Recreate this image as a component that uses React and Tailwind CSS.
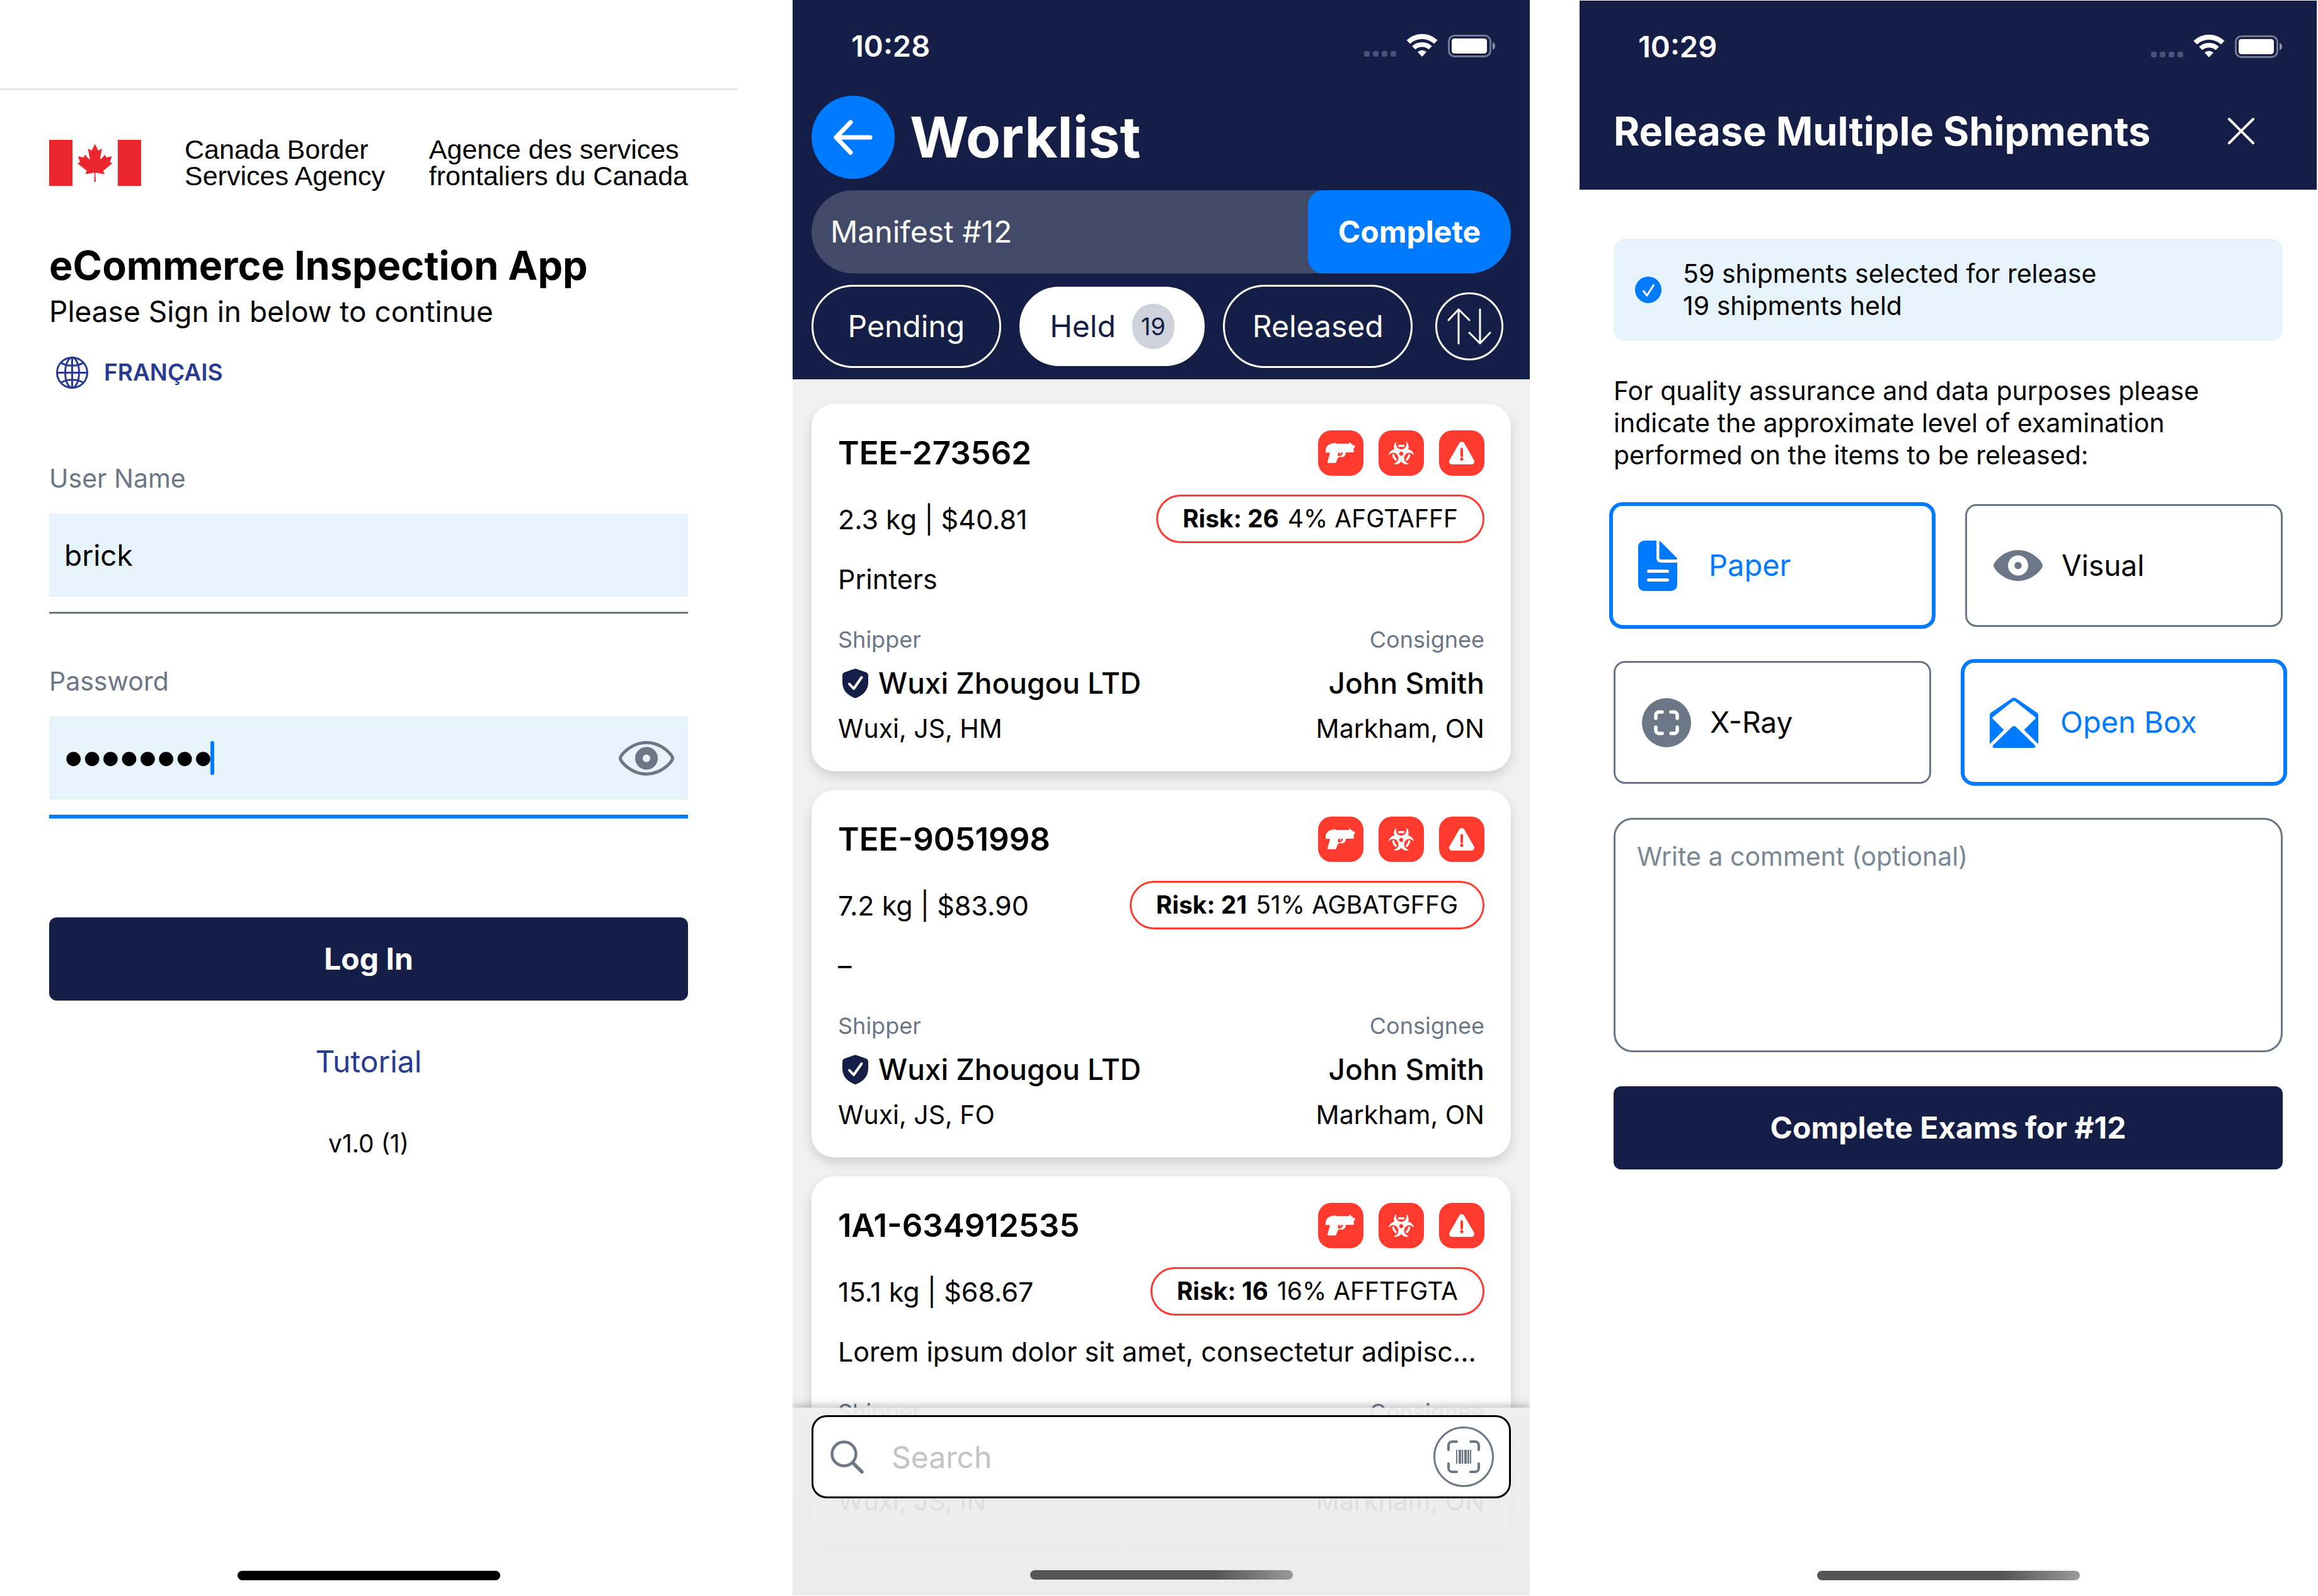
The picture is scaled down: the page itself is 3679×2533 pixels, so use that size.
import { FaBiohazard } from "react-icons/fa";

/* ---------- icons ---------- */

function StatusIcons() {
  return (
    <svg width="208" height="40" viewBox="0 0 208 40" fill="none" aria-hidden="true">
      <g fill="#4a5379">
        <rect x="0" y="28" width="9" height="9" rx="3" />
        <rect x="14" y="28" width="9" height="9" rx="3" />
        <rect x="28" y="28" width="9" height="9" rx="3" />
        <rect x="42" y="28" width="9" height="9" rx="3" />
      </g>
      <path d="M70.2 13.6a32 32 0 0 1 43.6 0" stroke="#fff" strokeWidth="8" />
      <path d="M78.8 22.9a19.3 19.3 0 0 1 26.4 0" stroke="#fff" strokeWidth="7.4" />
      <path d="M92 37l-7-7.5a10.3 10.3 0 0 1 14 0z" fill="#fff" />
      <rect x="134.5" y="3.5" width="66" height="33" rx="9" stroke="#727890" strokeWidth="3" />
      <rect x="139" y="8" width="56" height="24" rx="4.5" fill="#fff" />
      <path d="M204 14c5.300 2.600 5.300 9.400 0 12z" fill="#8f94aa" />
    </svg>
  );
}

function FlagIcon() {
  return (
    <svg width="146" height="73" viewBox="0 0 146 73" fill="#ec262d" role="img" aria-label="Canada">
      <path d="M0 0h37v73H0zM109 0h37v73h-37z" />
      <path
        transform="translate(72.7 36.300) scale(0.0149)"
        d="m-90 2030 45-863a95 95 0 0 0-111-98l-859 151 116-320a65 65 0 0 0-20-73l-941-762 212-99a65 65 0 0 0 34-79l-186-572 542 115a65 65 0 0 0 73-38l105-247 423 454a65 65 0 0 0 111-57l-204-1052 327 189a65 65 0 0 0 91-27l332-652 332 652a65 65 0 0 0 91 27l327-189-204 1052a65 65 0 0 0 111 57l423-454 105 247a65 65 0 0 0 73 38l542-115-186 572a65 65 0 0 0 34 79l212 99-941 762a65 65 0 0 0-20 73l116 320-859-151a95 95 0 0 0-111 98l45 863z"
      />
    </svg>
  );
}

function GlobeIcon() {
  return (
    <svg width="51" height="51" viewBox="0 0 51 51" fill="none" stroke="#283b93" strokeWidth="3" aria-hidden="true">
      <circle cx="25.5" cy="25.5" r="24" />
      <ellipse cx="25.5" cy="25.5" rx="11" ry="24" />
      <path d="M25.500 1.500v48M1.500 25.500h48M7 9c9 7 28 7 37 0M7 42c9-7 28-7 37 0" />
    </svg>
  );
}

function EyeOutlineIcon() {
  return (
    <svg width="88" height="55" viewBox="0 0 88 55" fill="none" aria-hidden="true">
      <path
        d="M2.500 27.500C2.500 22 20 2.500 44 2.500S85.500 22 85.500 27.500 68 52.500 44 52.500 2.500 33 2.500 27.500z"
        stroke="#6b7686"
        strokeWidth="5"
      />
      <circle cx="44" cy="27.500" r="12" stroke="#6b7686" strokeWidth="12" />
    </svg>
  );
}

function BackIcon() {
  return (
    <svg width="64" height="56" viewBox="0 0 64 56" fill="none" stroke="#fff" strokeWidth="7" strokeLinecap="round" strokeLinejoin="round" aria-hidden="true">
      <path d="M28 4L5 28l23 24M6 28h53" />
    </svg>
  );
}

function SortIcon() {
  return (
    <svg width="72" height="60" viewBox="0 0 72 60" fill="none" stroke="#fff" strokeWidth="3" strokeLinecap="round" strokeLinejoin="round" aria-hidden="true">
      <path d="M19 57V3M3 20L19 3l17 17M53 3v54M36 40l17 17 16-17" />
    </svg>
  );
}

function PistolIcon() {
  return (
    <svg width="72" height="72" viewBox="0 0 216 216" fill="#fff" aria-hidden="true">
      <path
        fillRule="evenodd"
        d="M36 104V94c2-14 10-27 28-31l7-1c1-3 13-3 14 0l6 2h56l1-6h6l3 6 7 2v5h11v12h-5v18c0 3-1 4-4 4h-34c-1 13-7 22-18 22-8 0-16-1-20 4l-8 21c-1 2-2 3-4 3H48c-3 0-4-2-3-5l11-40c0-2 0-4-3-4H38c-2 0-2-1-2-2zM97 105c-2 6-4 11-3 17 9 1 22 2 24-17h-8l-1 9c-4 1-6-2-5-9z"
      />
    </svg>
  );
}

function WarningIcon() {
  return (
    <svg width="40" height="36" viewBox="0 0 40 36" aria-hidden="true">
      <path d="M20 4.500L4.500 31.500h31z" fill="#fff" stroke="#fff" strokeWidth="9" strokeLinejoin="round" />
      <path d="M20 11.500v11" stroke="#ff3b30" strokeWidth="4" strokeLinecap="round" />
      <circle cx="20" cy="27.500" r="2.600" fill="#ff3b30" />
    </svg>
  );
}

function ShieldIcon() {
  return (
    <svg width="41" height="47" viewBox="0 0 41 47" aria-hidden="true">
      <path d="M18.500.8a5 5 0 0 1 4 0l15 5.200c2 .8 3.500 2.500 3.500 5v11c0 13-9 20.500-18.500 24.500a5 5 0 0 1-4 0C9 42.500 0 35 0 22V11c0-2.500 1.500-4.200 3.500-5z" fill="#141e46" />
      <path d="M11 24.500l7 7.500L30.500 14" fill="none" stroke="#fff" strokeWidth="4" strokeLinecap="round" strokeLinejoin="round" />
    </svg>
  );
}

function SearchIcon() {
  return (
    <svg width="53" height="53" viewBox="0 0 53 53" fill="none" stroke="#6b7686" strokeLinecap="round" aria-hidden="true">
      <circle cx="21.500" cy="21.500" r="19" strokeWidth="4.500" />
      <path d="M35.500 35.500L50 50" strokeWidth="5.500" />
    </svg>
  );
}

function BarcodeScanIcon() {
  return (
    <svg width="52" height="52" viewBox="0 0 52 52" aria-hidden="true">
      <path
        d="M2 15V8a6 6 0 0 1 6-6h7M37 2h7a6 6 0 0 1 6 6v7M50 37v7a6 6 0 0 1-6 6h-7M15 50H8a6 6 0 0 1-6-6v-7"
        fill="none"
        stroke="#6b7686"
        strokeWidth="4"
        strokeLinecap="round"
      />
      <path d="M14 15h2v22h-2zM18 15h4v22h-4zM23 15h2.400v22H23zM27 15h4v22h-4zM32 15h2.700v22H32zM36 15h2v22h-2z" fill="#6b7686" />
    </svg>
  );
}

function CloseIcon() {
  return (
    <svg width="44" height="44" viewBox="0 0 44 44" stroke="#fff" strokeWidth="4" strokeLinecap="round" aria-hidden="true">
      <path d="M3 3l38 38M41 3L3 41" />
    </svg>
  );
}

function CheckCircleIcon() {
  return (
    <svg width="42" height="42" viewBox="0 0 42 42" aria-hidden="true">
      <circle cx="21" cy="21" r="21" fill="#007aff" />
      <path d="M13.500 23l5.500 7 10.500-16.500" fill="none" stroke="#fff" strokeWidth="3" strokeLinecap="round" strokeLinejoin="round" />
    </svg>
  );
}

function PaperIcon() {
  return (
    <svg width="62" height="80" viewBox="0 0 62 80" fill="#007aff" aria-hidden="true">
      <path
        fillRule="evenodd"
        d="M11 0h18v27c0 5 3 8 8 8h25v34c0 7-4 11-11 11H11C4 80 0 76 0 69V11C0 4 4 0 11 0zM16.500 46a2.500 2.500 0 0 0 0 5h30a2.500 2.500 0 0 0 0-5zM16.500 60a2.500 2.500 0 0 0 0 5h30a2.500 2.500 0 0 0 0-5z"
      />
      <path d="M33.500.5c1 .3 2 1 3 2L60 26c1 1 2 2.500 2 4H36.500c-2 0-3-1-3-3z" />
    </svg>
  );
}

function EyeSolidIcon() {
  return (
    <svg width="78" height="49" viewBox="0 0 78 49" aria-hidden="true">
      <path d="M0 24.500C0 19 16 0 39 0s39 19 39 24.500S62 49 39 49 0 30 0 24.500z" fill="#6b7686" />
      <circle cx="39" cy="24.500" r="16" fill="#fff" />
      <circle cx="39" cy="24.500" r="5.800" fill="#6b7686" />
    </svg>
  );
}

function XRayIcon() {
  return (
    <svg width="78" height="78" viewBox="0 0 78 78" aria-hidden="true">
      <circle cx="39" cy="39" r="39" fill="#6b7686" />
      <path
        d="M22 32v-5a5 5 0 0 1 5-5h5M46 22h5a5 5 0 0 1 5 5v5M56 46v5a5 5 0 0 1-5 5h-5M32 56h-5a5 5 0 0 1-5-5v-5"
        fill="none"
        stroke="#fff"
        strokeWidth="5.500"
        strokeLinecap="round"
      />
    </svg>
  );
}

function OpenBoxIcon() {
  return (
    <svg width="77" height="80" viewBox="0 0 77 80" fill="#007aff" aria-hidden="true">
      <path d="M35 1.500c2.500-1.800 4.500-1.800 7 0l33 22.500c1.500 1 2 2.500 2 4.500v45.500L54.500 51.500 73 33c-.5-1.500-1.500-2.500-3-3.500L41 6.500c-2-1.300-3-1.300-5 0L7 29.500c-1.500 1-2.500 2-3 3.500l18.500 18.500L0 74V28.500c0-2 .5-3.500 2-4.500z" />
      <path d="M34.500 47.500c3-3 5-3 8 0L72 76c1 2 0 4-3 4H8c-3 0-4-2-3-4z" />
    </svg>
  );
}

/* ---------- shared parts ---------- */

function StatusBar({ time }) {
  return (
    <div className="flex items-center justify-between pt-[43px] pr-[55px] pl-[93px]">
      <span className="text-[47px] leading-[60px] font-semibold text-white">{time}</span>
      <StatusIcons />
    </div>
  );
}

function HomeIndicator({ tone }) {
  return <div className={`mx-auto h-[15px] w-[417px] rounded-full ${tone}`} />;
}

const fadeTone = "bg-linear-to-r from-[#555555] from-70% to-[#9a9a9a]";

/* ---------- sign-in screen ---------- */

function LoginScreen() {
  return (
    <section className="flex h-full min-w-0 flex-1 flex-col bg-white">
      <div className="h-[142px] border-b border-[#c4c4c6]" />
      <div className="flex flex-1 flex-col px-[78px] pt-[74px] pb-[24px]">
        <header className="flex items-center justify-between font-['Liberation_Sans',sans-serif] text-[43px] leading-[42px]">
          <div className="flex items-center gap-[69px]">
            <FlagIcon />
            <p>
              Canada Border
              <br />
              Services Agency
            </p>
          </div>
          <p>
            Agence des services
            <br />
            frontaliers du Canada
          </p>
        </header>

        <h1 className="mt-[82px] text-[63px] leading-[78px] font-bold">eCommerce Inspection App</h1>
        <p className="mt-1 text-[46px] leading-[60px]">Please Sign in below to continue</p>
        <a href="#francais" className="mt-[37px] flex items-center gap-[25px] self-start pl-[11px] text-[37px] leading-[60px] font-semibold text-[#283b93]">
          <GlobeIcon />
          FRANÇAIS
        </a>

        <form className="mt-[113px] flex flex-col" onSubmit={(e) => e.preventDefault()}>
          <label htmlFor="username" className="text-[41px] leading-[51px] text-[#6b7686]">
            User Name
          </label>
          <div className="mt-[30px] border-b-[3px] border-[#6b7686] pb-[24px]">
            <input id="username" type="text" defaultValue="brick" className="h-[132px] w-full bg-[#e6f3fa] px-[24px] text-[46px] outline-none" />
          </div>

          <label htmlFor="password" className="mt-[82px] text-[41px] leading-[51px] text-[#6b7686]">
            Password
          </label>
          <div className="mt-[30px] border-b-[6px] border-[#007aff] pb-[24px]">
            <div className="relative flex h-[132px] items-center bg-[#e6f3fa] pr-[22px]">
              <input
                id="password"
                type="password"
                defaultValue="password"
                className="h-full min-w-0 flex-1 bg-transparent px-[24px] font-['Liberation_Sans',sans-serif] text-[84px] outline-none"
              />
              <span className="absolute left-[256px] h-[54px] w-[6px] rounded-full bg-[#007aff]" />
              <button type="button" aria-label="Show password">
                <EyeOutlineIcon />
              </button>
            </div>
          </div>

          <button type="submit" className="mt-[157px] h-[132px] rounded-xl bg-[#141e46] text-[48px] font-bold text-white">
            Log In
          </button>
        </form>

        <a href="#tutorial" className="mt-[67px] self-center text-[48px] leading-[60px] text-[#283b93]">
          Tutorial
        </a>
        <p className="mt-[76px] text-center text-[39px] leading-[48px]">v1.0 (1)</p>

        <div className="mt-auto">
          <HomeIndicator tone="bg-black" />
        </div>
      </div>
    </section>
  );
}

/* ---------- worklist screen ---------- */

const shipments = [
  { id: "TEE-273562", weight: "2.3 kg | $40.81", risk: "26", detail: "4% AFGTAFFF", goods: "Printers", origin: "Wuxi, JS, HM" },
  { id: "TEE-9051998", weight: "7.2 kg | $83.90", risk: "21", detail: "51% AGBATGFFG", goods: "–", origin: "Wuxi, JS, FO" },
  {
    id: "1A1-634912535",
    weight: "15.1 kg | $68.67",
    risk: "16",
    detail: "16% AFFTFGTA",
    goods: "Lorem ipsum dolor sit amet, consectetur adipisc...",
    origin: "Wuxi, JS, IN",
  },
];

function AlertBadge({ children }) {
  return <span className="flex size-[72px] items-center justify-center rounded-[21px] bg-[#ff3b30] text-white">{children}</span>;
}

function ShipmentCard({ item }) {
  return (
    <article className="shrink-0 rounded-[36px] bg-white px-[42px] pt-[42px] pb-[44px] shadow-[0_8px_18px_rgba(0,0,0,0.14)]">
      <div className="flex items-center justify-between">
        <h2 className="text-[51px] leading-[72px] font-semibold">{item.id}</h2>
        <div className="flex gap-[24px]">
          <AlertBadge>
            <PistolIcon />
          </AlertBadge>
          <AlertBadge>
            <FaBiohazard className="h-[36px] w-[40px]" />
          </AlertBadge>
          <AlertBadge>
            <WarningIcon />
          </AlertBadge>
        </div>
      </div>
      <div className="mt-[30px] flex items-center justify-between">
        <p className="text-[43px] leading-[54px]">{item.weight}</p>
        <p className="flex h-[77px] items-center gap-[14px] rounded-full border-[3px] border-[#ff3b30] px-[39px] text-[39px]">
          <b className="font-bold">Risk: {item.risk}</b>
          <span>{item.detail}</span>
        </p>
      </div>
      <p className="mt-[30px] text-[43px] leading-[54px] whitespace-nowrap">{item.goods}</p>
      <div className="mt-[48px] flex justify-between">
        <div>
          <p className="text-[36px] leading-[42px] text-[#6b7686]">Shipper</p>
          <p className="mt-[18px] flex items-center gap-4 pl-[7px] text-[46px] leading-[60px] font-medium">
            <ShieldIcon />
            Wuxi Zhougou LTD
          </p>
          <p className="mt-[18px] text-[41px] leading-[48px]">{item.origin}</p>
        </div>
        <div className="text-right">
          <p className="text-[36px] leading-[42px] text-[#6b7686]">Consignee</p>
          <p className="mt-[18px] text-[46px] leading-[60px] font-medium">John Smith</p>
          <p className="mt-[18px] text-[41px] leading-[48px]">Markham, ON</p>
        </div>
      </div>
    </article>
  );
}

function WorklistScreen() {
  return (
    <section className="relative ml-[88px] flex h-full min-w-0 flex-1 flex-col overflow-hidden bg-[#f1f1f1]">
      <header className="bg-[#141e46] pb-[18px] text-white">
        <StatusBar time="10:28" />
        <div className="mt-[49px] flex items-center gap-[24px] px-[30px]">
          <button type="button" aria-label="Back" className="flex size-[132px] items-center justify-center rounded-full bg-[#007aff]">
            <BackIcon />
          </button>
          <h1 className="text-[90px] leading-[132px] font-bold">Worklist</h1>
        </div>
        <div className="mx-[30px] mt-[18px] flex h-[132px] items-center justify-between overflow-hidden rounded-full bg-[#424a6a] pl-[30px]">
          <p className="text-[48px]">Manifest #12</p>
          <button type="button" className="h-full w-[322px] rounded-l-[24px] bg-[#007aff] text-[48px] font-bold">
            Complete
          </button>
        </div>
        <nav className="mt-[18px] flex items-center gap-[26px] pr-[42px] pl-[30px] text-[48px]">
          <button type="button" className="h-[132px] flex-1 rounded-full border-[3px] border-white">
            Pending
          </button>
          <button
            type="button"
            className="flex h-[132px] flex-1 items-center justify-center gap-[26px] rounded-full border-[3px] border-[#141e46] bg-white text-[#141e46]"
          >
            Held
            <span className="flex h-[72px] w-[67px] items-center justify-center rounded-full bg-[#cfd2da] text-[38px]">19</span>
          </button>
          <button type="button" className="h-[132px] flex-1 rounded-full border-[3px] border-white">
            Released
          </button>
          <button type="button" aria-label="Sort" className="ml-[10px] flex size-[108px] items-center justify-center rounded-full border-[3px] border-white">
            <SortIcon />
          </button>
        </nav>
      </header>

      <div className="flex min-h-0 flex-1 flex-col gap-[30px] overflow-hidden px-[30px] pt-[39px]">
        {shipments.map((item) => (
          <ShipmentCard key={item.id} item={item} />
        ))}
      </div>

      <footer className="absolute inset-x-0 bottom-0 flex h-[298px] flex-col bg-linear-to-b from-[#eeeeee]/93 to-[#ebebeb]/95 px-[30px] pt-[12px] pb-[25px] shadow-[0_-2px_14px_rgba(0,0,0,0.3)]">
        <div className="flex h-[132px] items-center rounded-[24px] border-[3px] border-black bg-white pr-[24px] pl-[27px]">
          <SearchIcon />
          <input
            type="search"
            aria-label="Search"
            placeholder="Search"
            className="ml-[44px] h-full min-w-0 flex-1 bg-transparent text-[48px] outline-none placeholder:text-[#c4c4c6]"
          />
          <button type="button" aria-label="Scan barcode" className="flex size-[96px] items-center justify-center rounded-full border-[3px] border-[#6b7686]">
            <BarcodeScanIcon />
          </button>
        </div>
        <div className="mt-auto">
          <HomeIndicator tone={fadeTone} />
        </div>
      </footer>
    </section>
  );
}

/* ---------- release screen ---------- */

const examLevels = [
  { name: "Paper", Icon: PaperIcon, selected: true },
  { name: "Visual", Icon: EyeSolidIcon, selected: false },
  { name: "X-Ray", Icon: XRayIcon, selected: false },
  { name: "Open Box", Icon: OpenBoxIcon, selected: true },
];

function ExamOption({ name, Icon, selected }) {
  const frame = selected
    ? "-mx-[7px] -my-[3px] h-[201px] gap-[34px] rounded-[21px] border-[6px] border-[#007aff] pl-[40px] text-[47px] text-[#007aff]"
    : "h-[195px] gap-[30px] rounded-[18px] border-[3px] border-[#6b7686] pl-[42px] text-[46px] text-black";
  return (
    <label className={`relative flex items-center ${frame}`}>
      <input type="checkbox" defaultChecked={selected} className="sr-only" />
      <span className="flex w-[78px]">
        <Icon />
      </span>
      {name}
    </label>
  );
}

function ReleaseScreen() {
  return (
    <section className="ml-[79px] flex h-full min-w-0 flex-1 flex-col bg-white pt-px">
      <header className="bg-[#141e46] pb-[54px] text-white">
        <StatusBar time="10:29" />
        <div className="mt-[65px] flex items-center justify-between pr-[98px] pl-[54px]">
          <h1 className="text-[63px] leading-[78px] font-bold">Release Multiple Shipments</h1>
          <button type="button" aria-label="Close">
            <CloseIcon />
          </button>
        </div>
      </header>

      <div className="flex flex-1 flex-col px-[54px] pt-[78px] pb-[24px]">
        <div className="flex items-center gap-[34px] rounded-[18px] bg-[#e6f3fa] py-[30px] pl-[34px] text-[41px] leading-[51px]">
          <CheckCircleIcon />
          <p>
            59 shipments selected for release
            <br />
            19 shipments held
          </p>
        </div>
        <p className="mt-[54px] pr-[60px] text-[41px] leading-[51px]">
          For quality assurance and data purposes please indicate the approximate level of examination performed on the items to be released:
        </p>

        <div className="mt-[52px] grid grid-cols-2 gap-[54px]">
          {examLevels.map((level) => (
            <ExamOption key={level.name} {...level} />
          ))}
        </div>

        <textarea
          aria-label="Comment"
          placeholder="Write a comment (optional)"
          className="mt-[54px] block h-[372px] w-full resize-none rounded-[30px] border-[3px] border-[#6b7686] px-[34px] pt-[33px] text-[41px] leading-[51px] outline-none placeholder:text-[#7b8794]"
        />
        <button type="button" className="mt-[54px] h-[132px] rounded-xl bg-[#141e46] text-[48px] font-bold text-white">
          Complete Exams for #12
        </button>

        <div className="mt-auto">
          <HomeIndicator tone={fadeTone} />
        </div>
      </div>
    </section>
  );
}

export default function App() {
  return (
    <main className="flex h-screen overflow-hidden bg-white pr-[2px] pb-px font-[Inter,sans-serif] text-black">
      <LoginScreen />
      <WorklistScreen />
      <ReleaseScreen />
    </main>
  );
}
